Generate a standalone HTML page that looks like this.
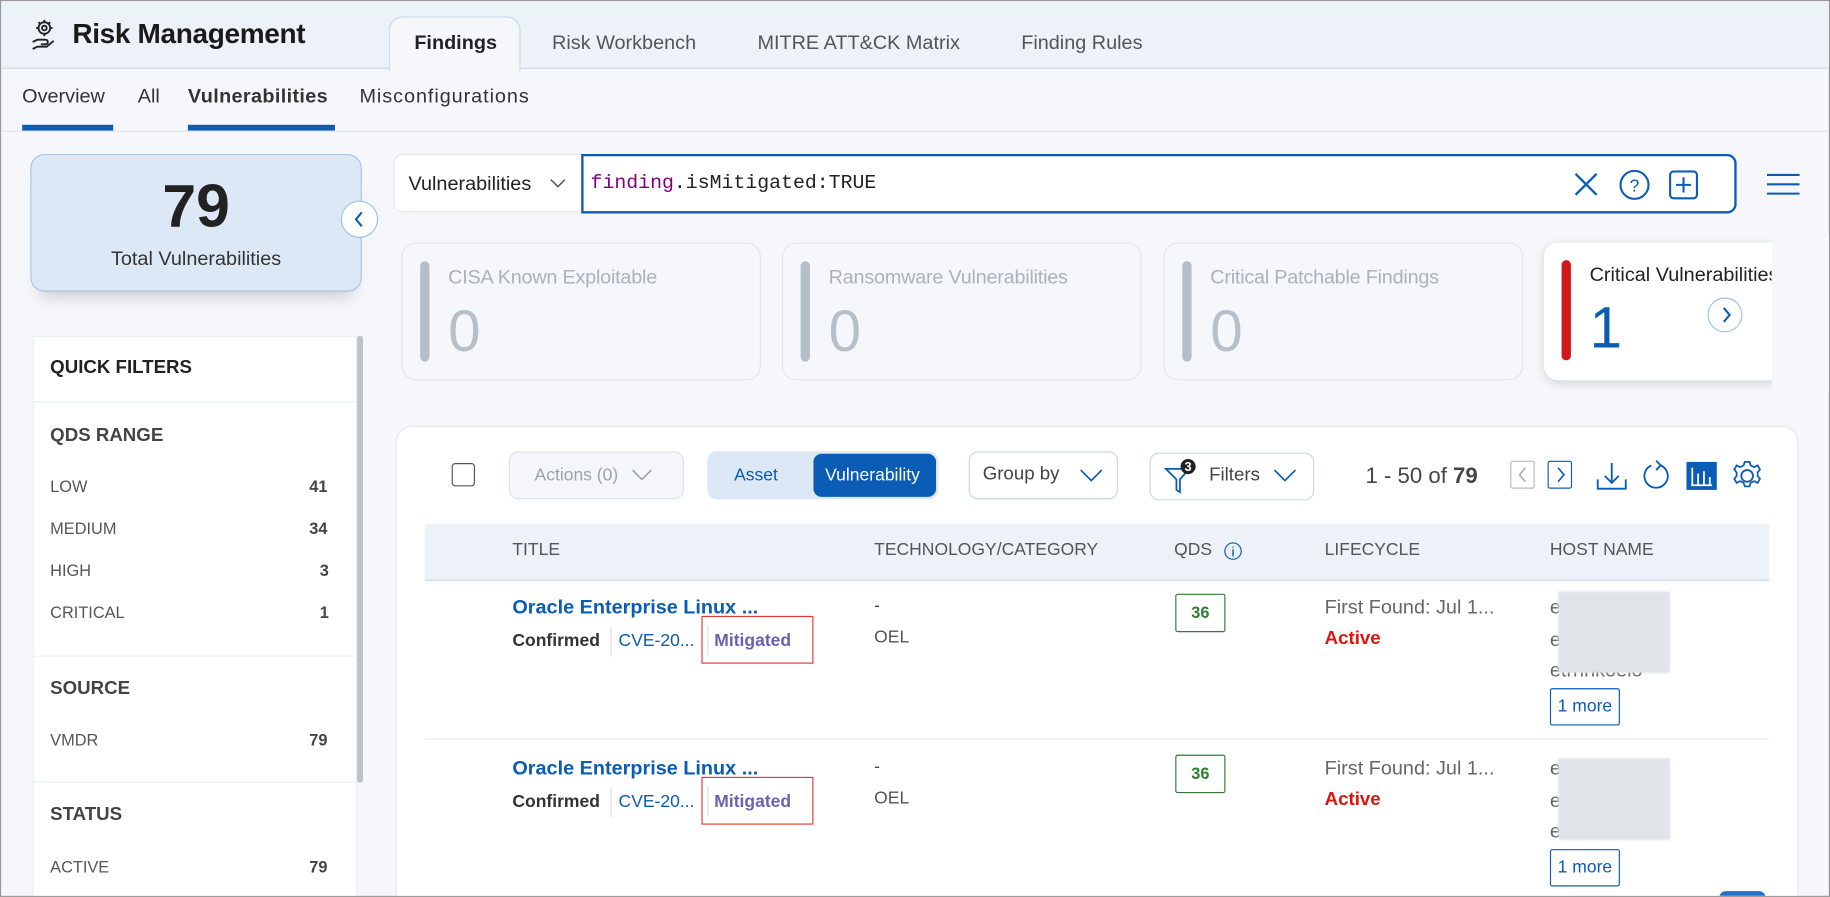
<!DOCTYPE html>
<html><head><meta charset="utf-8"><style>
*{box-sizing:border-box;margin:0;padding:0}
html,body{width:1830px;height:897px;overflow:hidden;background:#f5f7fa;font-family:"Liberation Sans",sans-serif}
#w{position:absolute;left:0;top:0;width:1568px;height:769px;transform:scale(1.16709,1.1664);transform-origin:0 0;background:#f5f7fa;border:1px solid #999;overflow:hidden}
.a{position:absolute;white-space:nowrap}
.card{position:absolute;top:207px;height:118px;width:308px;border:1px solid #e3e7ec;border-radius:12px;background:#f5f7fa}
.card .bar{position:absolute;left:15px;top:15px;width:8px;height:86px;border-radius:4px;background:#b3bec8}
.card .t{position:absolute;left:39px;top:19px;font-size:17px;color:#a9b3bd;letter-spacing:-.2px}
.card .n{position:absolute;left:39px;top:46px;font-size:50px;color:#b5c0cb}
.qf{font-size:14px;color:#555}
.qn{font-size:14px;font-weight:bold;color:#444}
.qh{font-size:16px;font-weight:bold;color:#444}
.hd{font-size:15px;color:#555;top:462px}
.btn{position:absolute;border:1px solid #c9d8ea;border-radius:8px;background:#fff}
.row{position:absolute;left:0;width:1568px;height:0}
</style></head><body><div id="w">
<div class="a" style="left:0;top:0;width:1568px;height:58px;background:#edf2f9;border-bottom:1px solid #c6d8ee"></div>
<svg class="a" style="left:25px;top:15px" width="22" height="28" viewBox="0 0 22 28" fill="none" stroke="#222" stroke-width="1.6"><circle cx="12" cy="8" r="5"/><circle cx="12" cy="8" r="2"/><path d="M12 1v2M12 13v2M5 8h2M17 8h2M7 3l1.5 1.5M17 3l-1.5 1.5"/><path d="M2 20l4-2h7a2 2 0 010 4H9M2 26l4-2h8l6-5"/></svg>
<div class="a" style="left:61px;top:15px;font-size:24px;font-weight:bold;color:#1a1a1a;letter-spacing:-.3px">Risk Management</div>
<div class="a" style="left:332px;top:13px;width:113px;height:47px;background:#f5f7fa;border:1px solid #c6d8ee;border-bottom:none;border-radius:12px 12px 0 0"></div>
<div class="a" style="left:354px;top:26px;font-size:17px;font-weight:bold;color:#222">Findings</div>
<div class="a" style="left:472px;top:26px;font-size:17px;color:#555">Risk Workbench</div>
<div class="a" style="left:648px;top:26px;font-size:17px;color:#555">MITRE ATT&amp;CK Matrix</div>
<div class="a" style="left:874px;top:26px;font-size:17px;color:#555">Finding Rules</div>
<div class="a" style="left:18px;top:72px;font-size:17px;color:#333">Overview</div>
<div class="a" style="left:117px;top:72px;font-size:17px;color:#333">All</div>
<div class="a" style="left:160px;top:72px;font-size:17px;font-weight:bold;color:#333;letter-spacing:.3px">Vulnerabilities</div>
<div class="a" style="left:307px;top:72px;font-size:17px;color:#333;letter-spacing:.8px">Misconfigurations</div>
<div class="a" style="left:18px;top:106px;width:78px;height:5px;background:#0b5cb5"></div>
<div class="a" style="left:160px;top:106px;width:126px;height:5px;background:#0b5cb5"></div>
<div class="a" style="left:0;top:111px;width:1568px;height:1px;background:#e0e4ea"></div>
<div class="a" style="left:25px;top:131px;width:284px;height:118px;background:#dce8f5;border:1px solid #a9c5e6;border-radius:12px;box-shadow:0 12px 14px -8px rgba(0,0,0,.18)"></div>
<div class="a" style="left:25px;top:146px;width:284px;text-align:center;font-size:52px;font-weight:bold;color:#222">79</div>
<div class="a" style="left:25px;top:211px;width:284px;text-align:center;font-size:17px;color:#333">Total Vulnerabilities</div>
<div class="a" style="left:291px;top:171px;width:32px;height:32px;border-radius:50%;background:#fff;border:1px solid #9fc0e6"></div>
<svg class="a" style="left:300px;top:179px" width="14" height="16" viewBox="0 0 14 16"><path d="M9 2L4 8l5 6" fill="none" stroke="#0b5cb5" stroke-width="1.8"/></svg>
<div class="a" style="left:27px;top:287px;width:278px;height:482px;background:#fff;border:1px solid #eceff3"></div>
<div class="a" style="left:305px;top:287px;width:5px;height:383px;background:#bfc3c8;border-radius:2px"></div>
<div class="a qh" style="left:42px;top:306px;color:#222">QUICK FILTERS</div>
<div class="a" style="left:27px;top:343px;width:278px;height:1px;background:#eceff3"></div>
<div class="a qh" style="left:42px;top:364px">QDS RANGE</div>
<div class="a qf" style="left:42px;top:408px">LOW</div><div class="a qn" style="left:264px;top:408px">41</div>
<div class="a qf" style="left:42px;top:444px">MEDIUM</div><div class="a qn" style="left:264px;top:444px">34</div>
<div class="a qf" style="left:42px;top:480px">HIGH</div><div class="a qn" style="left:273px;top:480px">3</div>
<div class="a qf" style="left:42px;top:516px">CRITICAL</div><div class="a qn" style="left:273px;top:516px">1</div>
<div class="a" style="left:27px;top:561px;width:278px;height:1px;background:#eceff3"></div>
<div class="a qh" style="left:42px;top:581px">SOURCE</div>
<div class="a qf" style="left:42px;top:625px">VMDR</div><div class="a qn" style="left:264px;top:625px">79</div>
<div class="a" style="left:27px;top:669px;width:278px;height:1px;background:#eceff3"></div>
<div class="a qh" style="left:42px;top:689px">STATUS</div>
<div class="a qf" style="left:42px;top:734px">ACTIVE</div><div class="a qn" style="left:264px;top:734px">79</div>
<div class="a" style="left:336px;top:131px;width:164px;height:50px;background:#fff;border:1px solid #e3e7ec;border-radius:8px 0 0 8px"></div>
<div class="a" style="left:349px;top:147px;font-size:17px;color:#222">Vulnerabilities</div>
<svg class="a" style="left:470px;top:151px" width="14" height="10"><path d="M1 2l6 6 6-6" fill="none" stroke="#555" stroke-width="1.3"/></svg>
<div class="a" style="left:497px;top:131px;width:990px;height:51px;background:#fff;border:2px solid #0b5cb5;border-radius:0 8px 8px 0"></div>
<div class="a" style="left:505px;top:147px;font-family:'Liberation Mono',monospace;font-size:17px;color:#222"><span style="color:#800080">finding</span>.isMitigated:TRUE</div>
<svg class="a" style="left:1347px;top:146px" width="22" height="22"><path d="M2 2l18 18M20 2L2 20" stroke="#0b5cb5" stroke-width="2"/></svg>
<svg class="a" style="left:1386px;top:144px" width="27" height="27"><circle cx="13.5" cy="13.5" r="12" fill="none" stroke="#0b5cb5" stroke-width="1.8"/><text x="13.5" y="19" text-anchor="middle" font-size="15" fill="#0b5cb5" font-family="Liberation Sans">?</text></svg>
<svg class="a" style="left:1429px;top:145px" width="25" height="25"><rect x="1" y="1" width="23" height="23" rx="3" fill="none" stroke="#0b5cb5" stroke-width="1.8"/><path d="M12.5 6v13M6 12.5h13" stroke="#0b5cb5" stroke-width="1.8"/></svg>
<svg class="a" style="left:1513px;top:147px" width="28" height="20"><path d="M0 2h28M0 10h28M0 18h28" stroke="#0b5cb5" stroke-width="1.8"/></svg>
<div class="card" style="left:343px"><div class="bar"></div><div class="t">CISA Known Exploitable</div><div class="n">0</div></div>
<div class="card" style="left:669px"><div class="bar"></div><div class="t">Ransomware Vulnerabilities</div><div class="n">0</div></div>
<div class="card" style="left:996px"><div class="bar"></div><div class="t">Critical Patchable Findings</div><div class="n">0</div></div>
<div class="a" style="left:1322px;top:207px;width:210px;height:118px;background:#fff;border-radius:12px;box-shadow:0 2px 8px rgba(0,0,0,.15);overflow:hidden">
<div class="a" style="left:15px;top:15px;width:8px;height:86px;border-radius:4px;background:#d0171b"></div>
<div class="a" style="left:39px;top:18px;font-size:17px;color:#222">Critical Vulnerabilities</div>
<div class="a" style="left:39px;top:44px;font-size:50px;color:#0b5cb5">1</div>
<div class="a" style="left:140px;top:47px;width:30px;height:30px;border-radius:50%;border:1px solid #9fc0e6;background:#fff"></div>
<svg class="a" style="left:149px;top:54px" width="14" height="16"><path d="M5 2l5 6-5 6" fill="none" stroke="#0b5cb5" stroke-width="1.8"/></svg>
</div>
<div class="a" style="left:1517px;top:200px;width:51px;height:135px;background:#f5f7fa"></div>
<div class="a" style="left:338px;top:364px;width:1202px;height:420px;background:#fff;border:1px solid #e3e7ec;border-radius:14px"></div>
<div class="a" style="left:386px;top:396px;width:20px;height:20px;border:1.5px solid #555;border-radius:3px;background:#fff"></div>
<div class="btn" style="left:435px;top:386px;width:150px;height:41px;background:#f4f6f9;border-color:#dde3ea"></div>
<div class="a" style="left:457px;top:398px;font-size:15px;color:#9aa4ae">Actions (0)</div>
<svg class="a" style="left:540px;top:401px" width="18" height="11"><path d="M1 1l8 8 8-8" fill="none" stroke="#9aa4ae" stroke-width="1.4"/></svg>
<div class="a" style="left:605px;top:386px;width:198px;height:41px;background:#dce8f5;border-radius:8px"></div>
<div class="a" style="left:628px;top:398px;font-size:15px;color:#0b5cb5">Asset</div>
<div class="a" style="left:696px;top:388px;width:105px;height:37px;background:#0b5cb5;border-radius:7px"></div>
<div class="a" style="left:706px;top:398px;font-size:15px;color:#fff">Vulnerability</div>
<div class="btn" style="left:829px;top:386px;width:128px;height:41px"></div>
<div class="a" style="left:841px;top:397px;font-size:16px;color:#444">Group by</div>
<svg class="a" style="left:924px;top:401px" width="20" height="12"><path d="M1 1l9 9 9-9" fill="none" stroke="#0b5cb5" stroke-width="1.5"/></svg>
<div class="btn" style="left:984px;top:387px;width:141px;height:41px"></div>
<svg class="a" style="left:996px;top:392px" width="28" height="32"><path d="M2 9h20l-8 9v11l-3-2v-9z" fill="none" stroke="#0b5cb5" stroke-width="1.5"/><circle cx="21" cy="7" r="6.5" fill="#222"/><text x="21" y="11" text-anchor="middle" font-size="11" font-weight="bold" fill="#fff" font-family="Liberation Sans">3</text></svg>
<div class="a" style="left:1035px;top:398px;font-size:16px;color:#444">Filters</div>
<svg class="a" style="left:1090px;top:401px" width="20" height="12"><path d="M1 1l9 9 9-9" fill="none" stroke="#0b5cb5" stroke-width="1.5"/></svg>
<div class="a" style="left:1169px;top:397px;font-size:19px;color:#444">1 - 50 of <b>79</b></div>
<div class="a" style="left:1293px;top:394px;width:21px;height:24px;border:1px solid #bbb;border-radius:2px"></div>
<svg class="a" style="left:1297px;top:398px" width="14" height="16"><path d="M9 2L4 8l5 6" fill="none" stroke="#aaa" stroke-width="1.3"/></svg>
<div class="a" style="left:1325px;top:394px;width:21px;height:24px;border:1.5px solid #0b5cb5;border-radius:2px"></div>
<svg class="a" style="left:1329px;top:398px" width="14" height="16"><path d="M5 2l5 6-5 6" fill="none" stroke="#0b5cb5" stroke-width="1.4"/></svg>
<svg class="a" style="left:1366px;top:394px" width="28" height="26"><path d="M14 2v17M8 13l6 6 6-6M2 16v8h24v-8" fill="none" stroke="#0b5cb5" stroke-width="1.6"/></svg>
<svg class="a" style="left:1405px;top:392px" width="26" height="30"><path d="M17 6a10 10 0 1 1-8 0" fill="none" stroke="#0b5cb5" stroke-width="1.6"/><path d="M13 2l4 4-4 4" fill="none" stroke="#0b5cb5" stroke-width="1.6"/></svg>
<div class="a" style="left:1444px;top:395px;width:26px;height:24px;background:#0b5cb5"></div>
<svg class="a" style="left:1444px;top:395px" width="26" height="24"><path d="M5 5v15M10 10v10M15 8v12M20 13v7M4 20h18" stroke="#fff" stroke-width="1.5" fill="none"/></svg>
<svg class="a" style="left:1482px;top:392px" width="28" height="30"><circle cx="14" cy="15" r="5" fill="none" stroke="#0b5cb5" stroke-width="1.6"/><path d="M12 3h4l1 3 3 1.5 3-1.5 2 3.5-2 2.5v3l2 2.5-2 3.5-3-1.5-3 1.5-1 3h-4l-1-3-3-1.5-3 1.5-2-3.5 2-2.5v-3l-2-2.5 2-3.5 3 1.5 3-1.5z" fill="none" stroke="#0b5cb5" stroke-width="1.5"/></svg>
<div class="a" style="left:363px;top:448px;width:1152px;height:49px;background:#edf2f9;border-bottom:1px solid #c6d8ee"></div>
<div class="a hd" style="left:438px">TITLE</div>
<div class="a hd" style="left:748px">TECHNOLOGY/CATEGORY</div>
<div class="a hd" style="left:1005px">QDS</div>
<svg class="a" style="left:1047px;top:463px" width="17" height="17"><circle cx="8.5" cy="8.5" r="7" fill="none" stroke="#0b5cb5" stroke-width="1"/><path d="M8.5 7v6M8.5 4.5v1" stroke="#0b5cb5" stroke-width="1.2"/></svg>
<div class="a hd" style="left:1134px">LIFECYCLE</div>
<div class="a hd" style="left:1327px">HOST NAME</div>
<div class="row" style="top:0">
 <div class="a" style="left:438px;top:510px;font-size:17px;font-weight:bold;color:#0b5cb5">Oracle Enterprise Linux ...</div>
 <div class="a" style="left:438px;top:540px;font-size:15px;font-weight:bold;color:#333">Confirmed</div>
 <div class="a" style="left:522px;top:536px;width:1px;height:26px;background:#ddd"></div>
 <div class="a" style="left:529px;top:540px;font-size:15px;color:#0b5cb5">CVE-20...</div>
 <div class="a" style="left:600px;top:527px;width:96px;height:41px;border:1.5px solid #e53935"></div>
 <div class="a" style="left:605px;top:535px;width:1px;height:26px;background:#ddd"></div>
 <div class="a" style="left:611px;top:540px;font-size:15px;font-weight:bold;color:#6a60b8">Mitigated</div>
 <div class="a" style="left:748px;top:510px;font-size:15px;color:#444">-</div>
 <div class="a" style="left:748px;top:537px;font-size:15px;color:#555">OEL</div>
 <div class="a" style="left:1006px;top:508px;width:43px;height:33px;border:1px solid #2e7d32;border-radius:2px;text-align:center;line-height:31px;font-size:14px;font-weight:bold;color:#2e7d32">36</div>
 <div class="a" style="left:1134px;top:510px;font-size:17px;color:#666">First Found: Jul 1...</div>
 <div class="a" style="left:1134px;top:538px;font-size:16px;font-weight:bold;color:#e0140c">Active</div>
 <div class="a" style="left:1327px;top:510px;font-size:17px;color:#666">e</div>
 <div class="a" style="left:1327px;top:538px;font-size:17px;color:#666">e</div>
 <div class="a" style="left:1327px;top:564px;font-size:17px;color:#666">etrnrikoelo</div>
 <div class="a" style="left:1334px;top:506px;width:96px;height:70px;background:#e0e4e8;filter:blur(1px)"></div>
 <div class="a" style="left:1327px;top:589px;width:60px;height:32px;border:1px solid #0b5cb5;border-radius:2px;text-align:center;line-height:30px;font-size:15px;color:#0b5cb5">1 more</div>
</div>
<div class="a" style="left:363px;top:632px;width:1152px;height:1px;background:#e6e9ee"></div>
<div class="row" style="top:138px">
 <div class="a" style="left:438px;top:510px;font-size:17px;font-weight:bold;color:#0b5cb5">Oracle Enterprise Linux ...</div>
 <div class="a" style="left:438px;top:540px;font-size:15px;font-weight:bold;color:#333">Confirmed</div>
 <div class="a" style="left:522px;top:536px;width:1px;height:26px;background:#ddd"></div>
 <div class="a" style="left:529px;top:540px;font-size:15px;color:#0b5cb5">CVE-20...</div>
 <div class="a" style="left:600px;top:527px;width:96px;height:41px;border:1.5px solid #e53935"></div>
 <div class="a" style="left:605px;top:535px;width:1px;height:26px;background:#ddd"></div>
 <div class="a" style="left:611px;top:540px;font-size:15px;font-weight:bold;color:#6a60b8">Mitigated</div>
 <div class="a" style="left:748px;top:510px;font-size:15px;color:#444">-</div>
 <div class="a" style="left:748px;top:537px;font-size:15px;color:#555">OEL</div>
 <div class="a" style="left:1006px;top:508px;width:43px;height:33px;border:1px solid #2e7d32;border-radius:2px;text-align:center;line-height:31px;font-size:14px;font-weight:bold;color:#2e7d32">36</div>
 <div class="a" style="left:1134px;top:510px;font-size:17px;color:#666">First Found: Jul 1...</div>
 <div class="a" style="left:1134px;top:538px;font-size:16px;font-weight:bold;color:#e0140c">Active</div>
 <div class="a" style="left:1327px;top:510px;font-size:17px;color:#666">e</div>
 <div class="a" style="left:1327px;top:538px;font-size:17px;color:#666">e</div>
 <div class="a" style="left:1327px;top:564px;font-size:17px;color:#666">etrnrikoelo</div>
 <div class="a" style="left:1334px;top:511px;width:96px;height:70px;background:#e0e4e8;filter:blur(1px)"></div>
 <div class="a" style="left:1327px;top:589px;width:60px;height:32px;border:1px solid #0b5cb5;border-radius:2px;text-align:center;line-height:30px;font-size:15px;color:#0b5cb5">1 more</div>
</div>
<div class="a" style="left:1472px;top:763px;width:40px;height:6px;border-radius:20px 20px 0 0;background:#1e6fd0"></div>
</div></body></html>
